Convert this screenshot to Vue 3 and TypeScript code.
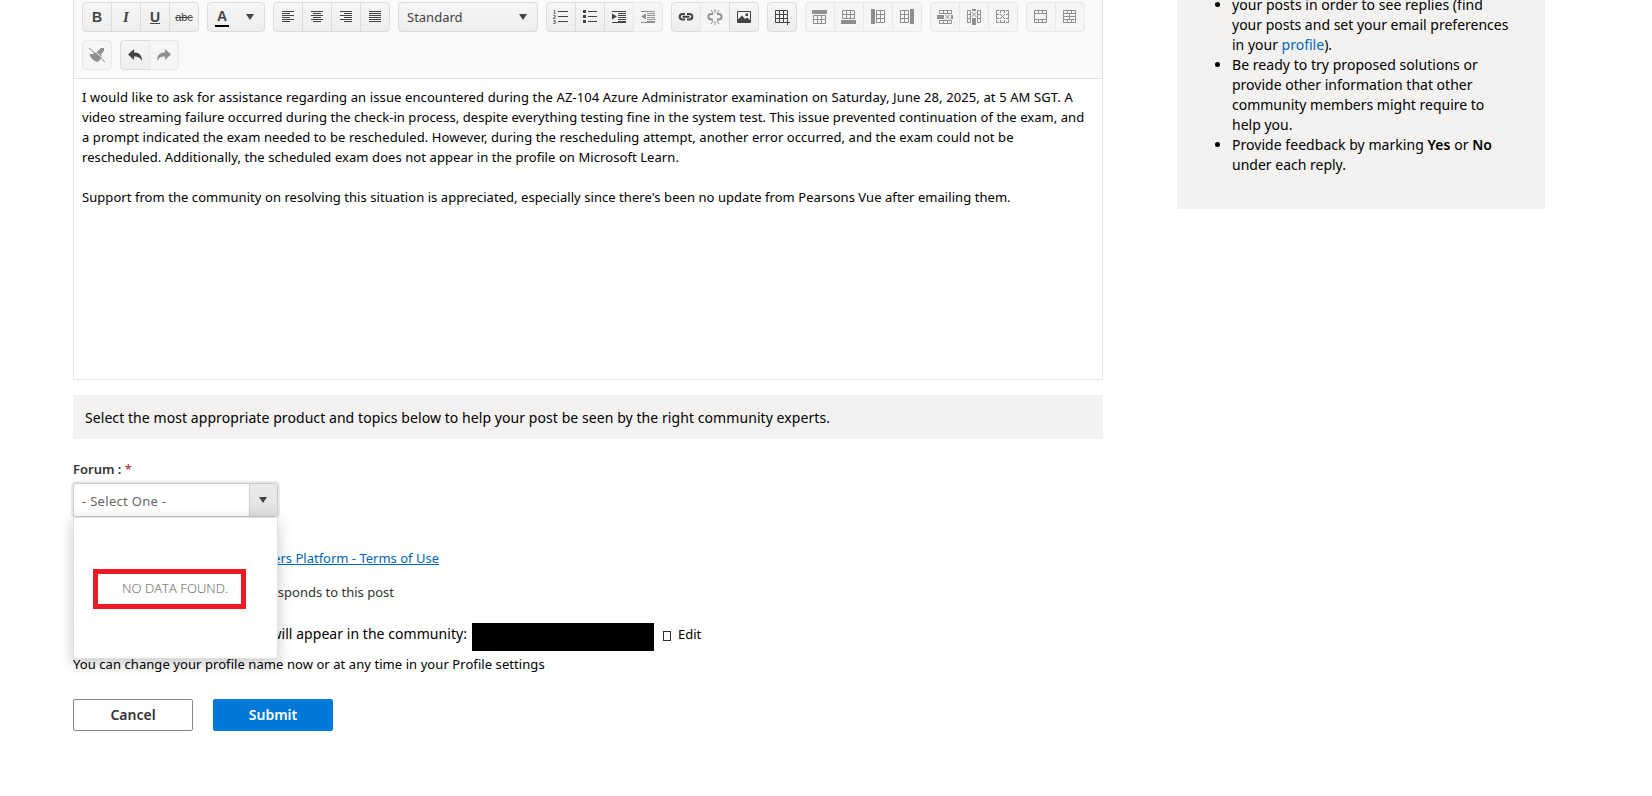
<script setup lang="ts">
interface Icon {
  line?: string
  fill?: string
  thick?: string
}

interface Tool {
  icon?: string
  text?: string
  cls?: string
  disabled?: boolean
}

interface Group {
  kind?: 'color' | 'format'
  tools: Tool[]
}

// 16x16 paths: line = 1px strokes, thick = 2px strokes, fill = solid shapes
const icons: Record<string, Icon> = {
  left: { line: 'M2 2.5h12M2 4.5h8M2 6.5h12M2 8.5h8M2 10.5h12M2 12.5h8' },
  center: { line: 'M2 2.5h12M4 4.5h8M2 6.5h12M4 8.5h8M2 10.5h12M4 12.5h8' },
  right: { line: 'M2 2.5h12M6 4.5h8M2 6.5h12M6 8.5h8M2 10.5h12M6 12.5h8' },
  justify: { line: 'M2 2.5h12M2 4.5h12M2 6.5h12M2 8.5h12M2 10.5h12M2 12.5h12' },
  ordered: { line: 'M5 2.5h10M5 7.5h10M5 12.5h10' },
  bullets: {
    line: 'M6 2.5h9M6 7.5h9M6 12.5h9',
    fill: 'M1 1h3v3h-3zM1 6h3v3h-3zM1 11h3v3h-3z'
  },
  indent: {
    line: 'M1 2.5h14M7 4.5h8M7 6.5h8M7 8.5h8M7 10.5h8M7 12.5h8M1 13.5h14',
    fill: 'M1 4.500l5 3l-5 3z'
  },
  outdent: {
    line: 'M1 2.5h14M7 4.5h8M7 6.5h8M7 8.5h8M7 10.5h8M7 12.5h8M1 13.5h14',
    fill: 'M6 4.500l-5 3l5 3z'
  },
  link: {
    thick: 'M7 5h-2.500a2.800 2.800 0 0 0 0 5.600h2.500M9 5h2.500a2.800 2.800 0 0 1 0 5.600h-2.500M4.500 7.800h7'
  },
  unlink: {
    thick: 'M6 5h-1.800a2.800 2.800 0 0 0 0 5.600h1.800M10 5h1.800a2.800 2.800 0 0 1 0 5.600h-1.800',
    line: 'M8 0v4M8 12v4M4 1l2 3M12 1l-2 3M4 15l2-3M12 15l-2-3'
  },
  image: {
    line: 'M1.5 2.5h13v11h-13z',
    fill: 'M2 13v-2.500l4-4l3 3.500l2-1.500l3 2.500v2zM9.500 4.500h2.500v2.500h-2.500z'
  },
  table: { line: 'M1.5 1.5h12v12h-12zM1.5 5.5h12M1.5 9.5h12M5.5 1.5v12M9.5 1.5v12M11 13.5h5M13.5 11v5' },
  rowAbove: { fill: 'M0 1h15v4h-15z', line: 'M1.5 6.5h12v8h-12zM1.5 10.5h12M5.5 6v9M9.5 6v9' },
  rowBelow: { fill: 'M0 11h15v4h-15z', line: 'M1.5 1.5h12v8h-12zM1.5 5.5h12M5.5 1v9M9.5 1v9' },
  colLeft: { fill: 'M1 0h4v15h-4z', line: 'M6.5 1.5h8v12h-8zM6 5.5h9M6 9.5h9M10.5 1v13' },
  colRight: { fill: 'M11 0h4v15h-4z', line: 'M1.5 1.5h8v12h-8zM1 5.5h9M1 9.5h9M5.5 1v13' },
  delRow: {
    fill: 'M0 6h7v4h-7zM14 6h2v4h-2z',
    line: 'M2.5 1.5h12v3h-12zM6.5 1v4M10.5 1v4M2.5 11.5h12v3h-12zM6.5 11v4M10.5 11v4M8 5.5l5 5M13 5.5l-5 5'
  },
  delCol: {
    fill: 'M6 9h4v7h-4zM6 0h4v2h-4z',
    line: 'M1.5 1.5h3v12h-3zM1 5.5h4M1 9.5h4M11.5 1.5h3v12h-3zM11 5.5h4M11 9.5h4M5.5 3l5 5M10.5 3l-5 5'
  },
  delTable: {
    line: 'M1.5 5v-3.5h3M6 1.5h3M11 1.5h2.5v3.5M13.5 6v3M13.5 10.5v3h-2.5M9 13.5h-3M4.5 13.5h-3v-3M1.5 9v-3M5.5 1v3M9.5 1v3M5.5 11v3M9.5 11v3M1 5.5h3M1 9.5h3M11 5.5h3M11 9.5h3M5 5l5 5M10 5l-5 5'
  },
  merge: { line: 'M1.5 1.5h12v12h-12zM1 4.5h13M1 10.5h13M5.5 1v4M9.5 1v4M5.5 10v4M9.5 10v4' },
  split: { line: 'M1.5 1.5h12v12h-12zM1 4.5h13M1 7.5h13M1 10.5h13M5.5 1v4M9.5 1v4M7.5 4v7M5.5 10v4M9.5 10v4' },
  clean: {
    fill: 'M1 7l3 0l5-3l3-3h3v3l-3 3l1 3l-3 4l-2 1l-4-2l-3-4z',
    line: 'M0 1l16 14'
  },
  undo: { fill: 'M1 7.5l6-5.5v3.5c5 0 8 2.500 8 8.500c-2-3.500-4-4.500-8-4.500v3.500z' },
  redo: { fill: 'M15 7.5l-6-5.5v3.5c-5 0-8 2.500-8 8.500c2-3.500 4-4.500 8-4.500v3.500z' }
}

const off = (icon: string): Tool => ({ icon, disabled: true })

const rows: Group[][] = [
  [
    {
      tools: [
        { text: 'B', cls: 'bold' },
        { text: 'I', cls: 'italic' },
        { text: 'U', cls: 'underline' },
        { text: 'abc', cls: 'strike' }
      ]
    },
    { kind: 'color', tools: [] },
    { tools: [{ icon: 'left' }, { icon: 'center' }, { icon: 'right' }, { icon: 'justify' }] },
    { kind: 'format', tools: [] },
    { tools: [{ icon: 'ordered' }, { icon: 'bullets' }, { icon: 'indent' }, off('outdent')] },
    { tools: [{ icon: 'link' }, off('unlink'), { icon: 'image' }] },
    { tools: [{ icon: 'table' }] },
    { tools: [off('rowAbove'), off('rowBelow'), off('colLeft'), off('colRight')] },
    { tools: [off('delRow'), off('delCol'), off('delTable')] },
    { tools: [off('merge'), off('split')] }
  ],
  [
    { tools: [off('clean')] },
    { tools: [{ icon: 'undo' }, off('redo')] }
  ]
]

const body = [
  'I would like to ask for assistance regarding an issue encountered during the AZ-104 Azure Administrator examination on Saturday, June 28, 2025, at 5 AM SGT. A',
  'video streaming failure occurred during the check-in process, despite everything testing fine in the system test. This issue prevented continuation of the exam, and',
  'a prompt indicated the exam needed to be rescheduled. However, during the rescheduling attempt, another error occurred, and the exam could not be',
  'rescheduled. Additionally, the scheduled exam does not appear in the profile on Microsoft Learn.',
  '',
  "Support from the community on resolving this situation is appreciated, especially since there's been no update from Pearsons Vue after emailing them."
]
</script>

<template>
  <div class="page">
    <main class="post-form">
      <section class="editor">
        <div class="toolbar">
          <div v-for="(row, r) in rows" :key="r" class="tool-row">
            <template v-for="(group, g) in row" :key="g">
              <button v-if="group.kind === 'color'" class="color-picker">
                <span class="color-letter">A</span>
                <i class="caret"></i>
              </button>
              <button v-else-if="group.kind === 'format'" class="format">
                <span>Standard</span>
                <i class="caret"></i>
              </button>
              <div v-else class="group">
                <button
                  v-for="(tool, t) in group.tools"
                  :key="t"
                  class="tool"
                  :disabled="tool.disabled"
                >
                  <span v-if="tool.text" :class="tool.cls">{{ tool.text }}</span>
                  <svg v-else-if="tool.icon" width="16" height="16" viewBox="0 0 16 16">
                    <path v-if="icons[tool.icon].fill" class="fill" :d="icons[tool.icon].fill" />
                    <path v-if="tool.icon === 'clean'" class="gap" d="M1 0l16 14" />
                    <path v-if="icons[tool.icon].line" class="line" :d="icons[tool.icon].line" />
                    <path v-if="icons[tool.icon].thick" class="thick" :d="icons[tool.icon].thick" />
                    <g v-if="tool.icon === 'ordered'" class="digits">
                      <text x="0" y="4.5">1</text>
                      <text x="0" y="9.5">2</text>
                      <text x="0" y="14.5">3</text>
                    </g>
                  </svg>
                </button>
              </div>
            </template>
          </div>
        </div>
        <div class="content">
          <p v-for="(line, i) in body" :key="i" :class="'line-' + i">{{ line }}</p>
        </div>
      </section>

      <div class="banner">
        Select the most appropriate product and topics below to help your post be seen by the right community experts.
      </div>

      <label class="forum-label">Forum : <em>*</em></label>
      <div class="combo">
        <span class="combo-value">- Select One -</span>
        <span class="combo-arrow"><i class="caret"></i></span>
        <div class="popup">
          <span class="no-data">NO DATA FOUND.</span>
          <div class="highlight"></div>
        </div>
      </div>

      <div class="terms"><a>Answers Platform - Terms of Use</a></div>
      <div class="notify">someone responds to this post</div>
      <div class="profile-name">
        <span class="name-label">name that will appear in the community:</span>
        <span class="name-value"></span>
        <span class="edit-icon"></span>
        <span class="edit">Edit</span>
      </div>
      <p class="hint">You can change your profile name now or at any time in your Profile settings</p>

      <div class="actions">
        <button class="btn">Cancel</button>
        <button class="btn primary">Submit</button>
      </div>
    </main>

    <aside class="tips">
      <ul>
        <li>
          <span class="loose">your posts in order to see replies (find</span><br />
          your posts and set your email preferences<br />
          in your <a>profile</a>).
        </li>
        <li>
          <span class="loose">Be ready to try proposed solutions or</span><br />
          provide other information that other<br />
          community members might require to<br />
          help you.
        </li>
        <li>
          <span class="loose">Provide feedback by marking <b>Yes</b> or <b>No</b></span><br />
          under each reply.
        </li>
      </ul>
    </aside>
  </div>
</template>

<style>
body {
  background: #fff;
}
</style>

<style scoped>
.page {
  display: flex;
  align-items: flex-start;
  gap: 74px;
  height: 796px;
  padding-left: 73px;
  overflow: hidden;
  box-sizing: border-box;
  font-family: "Noto Sans", "Open Sans", sans-serif;
  font-size: 13px;
  line-height: 20px;
  color: #000;
  white-space: nowrap;
}

.post-form {
  width: 1030px;
}

button {
  font-family: inherit;
  padding: 0;
}

.editor {
  border: 1px solid #e6e6e6;
  border-top: none;
  box-sizing: border-box;
  height: 380px;
}

.toolbar {
  display: flex;
  flex-direction: column;
  gap: 8px;
  height: 79px;
  padding: 2px 8px 0;
  box-sizing: border-box;
  background: #fafafa;
  border-bottom: 1px solid #e0e0e0;
}

.tool-row {
  display: flex;
  gap: 8px;
}

.group {
  display: flex;
}

.tool,
.color-picker,
.format {
  height: 30px;
  box-sizing: border-box;
  border: 1px solid #dbdbdb;
  background: linear-gradient(#f6f6f6, #eee);
  color: #444;
}

.tool {
  display: flex;
  align-items: center;
  justify-content: center;
  width: 30px;
  margin-right: -1px;
}

.tool:first-child {
  border-radius: 4px 0 0 4px;
}

.tool:last-child {
  margin-right: 0;
  border-radius: 0 4px 4px 0;
}

.tool:only-child {
  border-radius: 4px;
}

.tool:disabled {
  border-color: #e8e8e8;
  background: #f5f5f5;
  color: #8f8f8f;
}

.tool svg {
  display: block;
  overflow: visible;
}

.line {
  fill: none;
  stroke: currentColor;
  stroke-width: 1;
}

.gap {
  fill: none;
  stroke: #f5f5f5;
  stroke-width: 1;
}

.fill {
  fill: currentColor;
}

.thick {
  fill: none;
  stroke: currentColor;
  stroke-width: 2;
}

.digits {
  fill: currentColor;
  font: bold 5px "Liberation Sans", sans-serif;
}

.bold,
.underline {
  font: bold 14px "Liberation Sans", sans-serif;
}

.italic {
  font: italic bold 15px "Liberation Serif", serif;
}

.underline {
  text-decoration: underline;
}

.strike {
  font: 11px "Liberation Sans", sans-serif;
  text-decoration: line-through;
}

.color-picker {
  display: flex;
  align-items: center;
  justify-content: space-between;
  width: 58px;
  padding: 0 10px 0 7px;
  border-radius: 4px;
}

.color-letter {
  width: 14px;
  border-bottom: 2px solid #000;
  font: bold 14px/17px "Liberation Sans", sans-serif;
}

.format {
  display: flex;
  align-items: center;
  justify-content: space-between;
  width: 140px;
  padding: 0 10px 0 8px;
  border-radius: 4px;
  font-size: 13px;
}

.caret {
  border: 4px solid transparent;
  border-top: 6px solid #444;
  border-bottom: none;
}

.content {
  padding: 8px;
}

.content p {
  margin: 0;
  height: 20px;
}

.content .line-0 {
  letter-spacing: 0.11px;
}

.content .line-1 {
  letter-spacing: 0.057px;
}

.content .line-2,
.content .line-3 {
  letter-spacing: 0.076px;
}

.content .line-5 {
  letter-spacing: 0.057px;
}

.banner {
  height: 44px;
  margin-top: 15px;
  padding-left: 12px;
  box-sizing: border-box;
  background: #f3f2f1;
  font-size: 14px;
  line-height: 46px;
  letter-spacing: 0.07px;
}

.forum-label {
  display: block;
  margin-top: 20px;
  color: #333;
  font-weight: 600;
}

.forum-label em {
  color: #a4262c;
  font-style: normal;
  font-weight: 400;
}

.combo {
  position: relative;
  display: flex;
  width: 205px;
  height: 34px;
  margin-top: 4px;
  box-sizing: border-box;
  border: 1px solid #ccc;
  border-radius: 3px;
  box-shadow: 0 0 1px 2px #e8e8e8;
  background: #fff;
}

.combo-value {
  flex: 1;
  padding: 7px 0 0 8px;
  color: #666;
  letter-spacing: 0.3px;
}

.combo-arrow {
  display: flex;
  align-items: center;
  justify-content: center;
  width: 28px;
  padding: 0 2px 1px 0;
  box-sizing: border-box;
  border-left: 1px solid #ccc;
  background: linear-gradient(#ebebeb, #e0e0e0);
}

.popup {
  position: absolute;
  left: -1px;
  top: 33px;
  width: 205px;
  height: 142px;
  box-sizing: border-box;
  border: 1px solid #e0e0e0;
  background: #fff;
  box-shadow: 0 4px 14px rgba(0, 0, 0, 0.22);
}

.no-data {
  position: absolute;
  left: 48px;
  top: 60px;
  font-family: "Open Sans", sans-serif;
  font-weight: 300;
  letter-spacing: 0.08px;
  color: #555;
}

.highlight {
  position: absolute;
  left: 19px;
  top: 51px;
  width: 153px;
  height: 40px;
  box-sizing: border-box;
  border: 5px solid #ed1c24;
}

.terms,
.notify,
.name-label {
  display: flex;
  justify-content: flex-end;
}

.terms {
  width: 366px;
  margin-top: 31px;
}

.terms a {
  color: #0067b8;
  text-decoration: underline;
}

.notify {
  width: 321px;
  margin-top: 14px;
  color: #333;
}

.profile-name {
  display: flex;
  height: 28px;
  margin-top: 21px;
}

.name-label {
  width: 394px;
  padding-top: 1px;
  font-size: 14px;
  letter-spacing: 0.05px;
}

.name-value {
  width: 182px;
  margin-left: 5px;
  background: #000;
}

.edit-icon {
  width: 8px;
  height: 10px;
  margin: 8px 7px 0 9px;
  box-sizing: border-box;
  border: 1px solid #333;
}

.edit {
  padding-top: 1px;
}

.hint {
  margin: 3px 0 0;
  letter-spacing: 0.07px;
}

.actions {
  display: flex;
  gap: 20px;
  margin-top: 25px;
}

.btn {
  width: 120px;
  height: 32px;
  padding-bottom: 2px;
  box-sizing: border-box;
  border: 1px solid #8a8886;
  border-radius: 2px;
  background: #fff;
  color: #333;
  font-size: 14px;
  font-weight: 600;
}

.primary {
  border-color: #0078d7;
  background: #0078d7;
  color: #fff;
}

.tips {
  display: flex;
  align-items: flex-end;
  width: 368px;
  height: 209px;
  overflow: hidden;
  background: #f3f2f1;
  font-size: 14px;
}

.tips ul {
  margin: 0;
  padding: 0 0 34px 55px;
}

.tips a {
  color: #0067b8;
}

.tips b {
  font-weight: 600;
}

.loose {
  letter-spacing: 0.04px;
}
</style>
